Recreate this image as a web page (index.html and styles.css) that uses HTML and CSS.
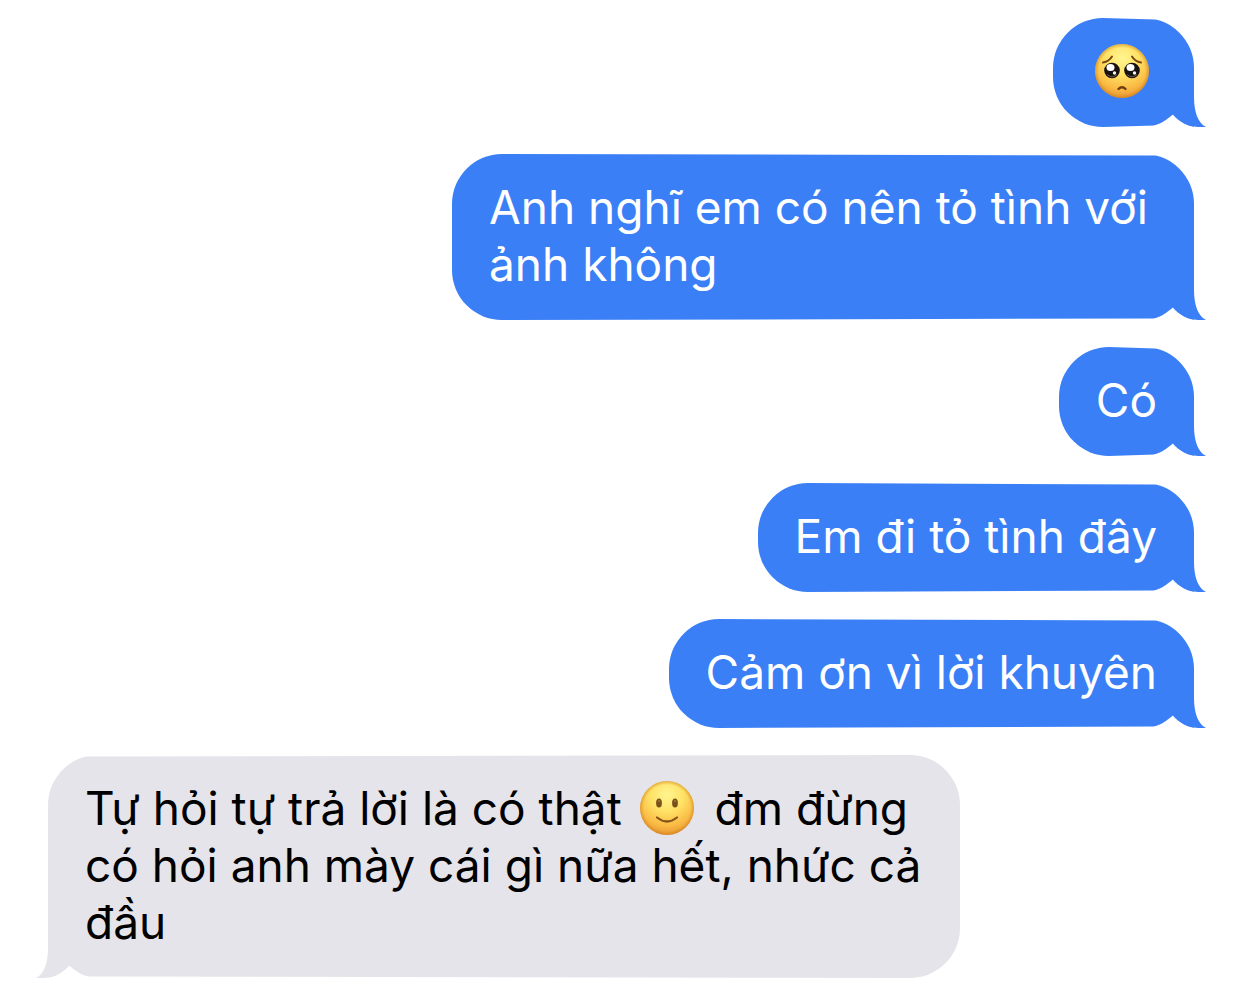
FILE: index.html
```html
<!DOCTYPE html>
<html lang="vi">
<head>
    <meta charset="UTF-8">
    <meta name="viewport" content="width=device-width, initial-scale=1.0">
    <title>Tin nhắn</title>
    <link rel="stylesheet" href="styles.css">
</head>
<body>
    <svg class="defs" aria-hidden="true">
        <defs>
            <radialGradient id="face-shade" cx="50%" cy="26%" r="76%">
                <stop offset="0" stop-color="#fff590"/>
                <stop offset="0.4" stop-color="#ffe266"/>
                <stop offset="0.75" stop-color="#fabb45"/>
                <stop offset="1" stop-color="#e6922f"/>
            </radialGradient>
            <radialGradient id="face-rim">
                <stop offset="0.86" stop-color="#c77a18" stop-opacity="0"/>
                <stop offset="1" stop-color="#c77a18" stop-opacity="0.5"/>
            </radialGradient>
            <symbol id="tail" viewBox="0 0 52 60">
                <path class="tail__notch" d="M0 61V58.500C7 57 13 52.500 19 47.500C25 54 33 60 44 60V61Z"/>
                <path class="tail__hook" d="M39 24H40V30C40 45 44 56 52 60C38 61 27 57 19 47.500L39 24Z"/>
            </symbol>
        </defs>
    </svg>
    <main class="chat">
        <div class="bubble bubble--sent">
            <svg class="emoji" viewBox="0 0 54 54" role="img" aria-label="🥺">
                <circle cx="27" cy="27" r="27" fill="url(#face-shade)"/>
                <circle cx="27" cy="27" r="27" fill="url(#face-rim)"/>
                <path d="M8 18.500Q14 17.500 17 12.500M37 12.500Q40 17.500 46 18.500" fill="none" stroke="#7d4a15" stroke-width="2" stroke-linecap="round"/>
                <circle cx="17" cy="26.500" r="7.800" fill="#17120f"/>
                <circle cx="37" cy="26.500" r="7.800" fill="#17120f"/>
                <path d="M12 30.500Q17 35 22 30.500M32 30.500Q37 35 42 30.500" fill="none" stroke="#65584e" stroke-width="1"/>
                <ellipse cx="15.500" cy="23.500" rx="4" ry="3.500" fill="#fff"/>
                <ellipse cx="35.500" cy="23.500" rx="4" ry="3.500" fill="#fff"/>
                <circle cx="19.500" cy="29" r="1.700" fill="#f4f4f4"/>
                <circle cx="39.500" cy="29" r="1.700" fill="#f4f4f4"/>
                <path d="M23.500 45Q27 41.500 30.500 45" fill="none" stroke="#6d3b12" stroke-width="2.400" stroke-linecap="round"/>
            </svg>
            <svg class="tail" aria-hidden="true"><use href="#tail"/></svg>
        </div>
        <div class="bubble bubble--sent">
            Anh nghĩ em có nên tỏ tình với ảnh không
            <svg class="tail" aria-hidden="true"><use href="#tail"/></svg>
        </div>
        <div class="bubble bubble--sent">
            Có
            <svg class="tail" aria-hidden="true"><use href="#tail"/></svg>
        </div>
        <div class="bubble bubble--sent">
            Em đi tỏ tình đây
            <svg class="tail" aria-hidden="true"><use href="#tail"/></svg>
        </div>
        <div class="bubble bubble--sent">
            Cảm ơn vì lời khuyên
            <svg class="tail" aria-hidden="true"><use href="#tail"/></svg>
        </div>
        <div class="bubble bubble--received">
            Tự hỏi tự trả lời là có thật
            <svg class="emoji" viewBox="0 0 54 54" role="img" aria-label="🙂">
                <circle cx="27" cy="27" r="27" fill="url(#face-shade)"/>
                <circle cx="27" cy="27" r="27" fill="url(#face-rim)"/>
                <ellipse cx="19" cy="22" rx="2.900" ry="4.600" fill="#78501a"/>
                <ellipse cx="35" cy="22" rx="2.900" ry="4.600" fill="#78501a"/>
                <circle cx="19" cy="20" r="1" fill="#a77a38"/>
                <circle cx="35" cy="20" r="1" fill="#a77a38"/>
                <path d="M17 36.500Q27 44.500 37 36.500" fill="none" stroke="#85551a" stroke-width="2.200" stroke-linecap="round"/>
            </svg>
            đm đừng có hỏi anh mày cái gì nữa hết, nhức cả đầu
            <svg class="tail" aria-hidden="true"><use href="#tail"/></svg>
        </div>
    </main>
</body>
</html>
```

FILE: styles.css
```css
body {
    margin: 0;
    font-family: "Inter", sans-serif;
    background-color: rgb(255,255,255);
}
.defs {
    position: absolute;
    width: 0;
    height: 0;
}
.chat {
    display: flex;
    flex-direction: column;
    gap: 27px;
    padding: 18px 48px 17px;
}
.bubble {
    --bubble-color: rgb(58,127,246);
    position: relative;
    box-sizing: border-box;
    padding: 25px 37px 27px;
    font-size: 46px;
    line-height: 57px;
    background-color: var(--bubble-color);
}
.bubble--sent {
    align-self: flex-end;
    max-width: min(100%, 742px);
    border-radius: 50px 50px 0 50px;
    color: rgb(255,255,255);
}
.bubble--received {
    --bubble-color: rgb(229,228,234);
    align-self: flex-start;
    max-width: min(100%, 912px);
    border-radius: 50px 50px 50px 0;
    color: rgb(0,0,0);
}
/* thin wedges: the bubble gets a little lower towards the tail side */
.bubble::before,
.bubble::after {
    content: "";
    position: absolute;
    left: 50px;
    right: 39px;
    height: 2px;
    background-color: rgb(255,255,255);
}
.bubble::before {
    top: 0;
    clip-path: polygon(0 0, 100% 0, 100% 75%);
}
.bubble::after {
    bottom: 0;
    clip-path: polygon(0 100%, 100% 100%, 100% 25%);
}
.bubble--received::before,
.bubble--received::after {
    left: 39px;
    right: 50px;
    transform: scaleX(-1);
}
.tail {
    position: absolute;
    right: -12px;
    bottom: 0;
    width: 52px;
    height: 60px;
}
.bubble--received .tail {
    right: auto;
    left: -12px;
    transform: scaleX(-1);
}
.tail__notch {
    fill: rgb(255,255,255);
}
.tail__hook {
    fill: var(--bubble-color);
}
.emoji {
    width: 54px;
    height: 54px;
    margin: 0 8px 0 5px;
    vertical-align: -10px;
}
```
